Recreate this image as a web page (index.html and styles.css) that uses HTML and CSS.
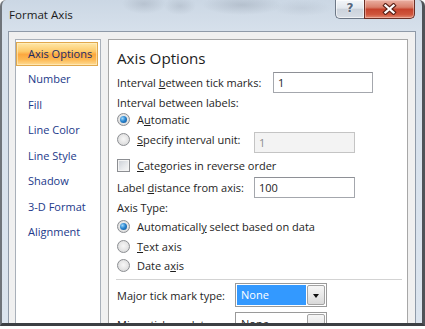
FILE: index.html
```html
<!DOCTYPE html>
<html>
<head>
<meta charset="utf-8">
<link rel="stylesheet" href="styles.css">
</head>
<body>
<div class="window">
  <div class="titlebar">
    <span class="title">Format Axis</span>
    <div class="caption-buttons">
      <div class="btn-help">?</div>
      <div class="btn-close">
        <svg width="15" height="12" viewBox="0 0 15 12">
          <path d="M3.5 2.5 L11.5 9.5 M11.5 2.5 L3.5 9.5" stroke="#5b2219" stroke-width="4.4" stroke-linecap="square" fill="none"/>
          <path d="M3.5 2.5 L11.5 9.5 M11.5 2.5 L3.5 9.5" stroke="#ffffff" stroke-width="2.3" stroke-linecap="square" fill="none"/>
        </svg>
      </div>
    </div>
  </div>
  <div class="client">
    <ul class="nav">
      <li class="active">Axis Options</li>
      <li>Number</li>
      <li>Fill</li>
      <li>Line Color</li>
      <li>Line Style</li>
      <li>Shadow</li>
      <li>3-D Format</li>
      <li>Alignment</li>
    </ul>
    <div class="panel">
      <h1 class="heading">Axis Options</h1>
      <div class="row r-ticks">
        <span class="lbl w-ticks">Interval <u>b</u>etween tick marks:</span>
        <div class="input w-100">1</div>
      </div>
      <div class="row r-text18">Interval between labels:</div>
      <div class="row r-radio17">
        <span class="radio checked"></span><span class="opt">A<u>u</u>tomatic</span>
      </div>
      <div class="row r-spec">
        <div class="optwrap">
          <span class="radio"></span><span class="opt w-spec"><u>S</u>pecify interval unit:</span>
        </div>
        <div class="input disabled w-101">1</div>
      </div>
      <div class="row r-check">
        <span class="check"></span><span class="opt"><u>C</u>ategories in reverse order</span>
      </div>
      <div class="row r-dist">
        <span class="lbl w-dist">Label <u>d</u>istance from axis:</span>
        <div class="input w-101">100</div>
      </div>
      <div class="row r-axistype">Axis Type:</div>
      <div class="row r-radio">
        <span class="radio checked"></span><span class="opt">Automaticall<u>y</u> select based on data</span>
      </div>
      <div class="row r-radio">
        <span class="radio"></span><span class="opt"><u>T</u>ext axis</span>
      </div>
      <div class="row r-radio">
        <span class="radio"></span><span class="opt">Date a<u>x</u>is</span>
      </div>
      <div class="separator"></div>
      <div class="row r-major">
        <span class="lbl w-tick">Major tick mark type:</span>
        <div class="combo selected"><span class="val">None</span><span class="arrow"></span></div>
      </div>
      <div class="row r-minor">
        <span class="lbl w-tick">Minor tick mark type:</span>
        <div class="combo"><span class="val">None</span><span class="arrow"></span></div>
      </div>
    </div>
  </div>
</div>
</body>
</html>
```
FILE: styles.css
```css
html, body {
  margin: 0;
  padding: 0;
  background: #ffffff;
}

body {
  font-family: "Open Sans", "Noto Sans", sans-serif;
  font-size: 11px;
  color: #1e1e1e;
}

.window {
  width: 425px;
  height: 326px;
  box-sizing: border-box;
  overflow: hidden;
  border-left: 2px solid #6f747a;
  border-right: 3px solid #4f5358;
  border-bottom: 3px solid #3c3f43;
  border-top-left-radius: 6px;
  border-top-right-radius: 6px;
  background:
    radial-gradient(ellipse 22px 10px at 142px 4px, rgba(120,130,145,0.25), transparent),
    radial-gradient(ellipse 16px 9px at 178px 6px, rgba(120,130,145,0.22), transparent),
    radial-gradient(ellipse 40px 10px at 240px 5px, rgba(110,120,135,0.25), transparent),
    radial-gradient(ellipse 30px 8px at 300px 8px, rgba(130,140,155,0.15), transparent),
    linear-gradient(180deg, #cbd7e4 0px, #d6e0eb 30px, #dbe4ee 100%);
  box-shadow: 0 1px 2px rgba(0,0,0,0.35);
}

.titlebar {
  height: 31px;
  display: flex;
  padding-left: 7px;
  padding-right: 7px;
}

.title {
  font-size: 11.6px;
  line-height: 16px;
  padding-top: 7px;
  color: #1b1b1b;
}

.caption-buttons {
  margin-left: auto;
  display: flex;
  align-self: flex-start;
}

.btn-help {
  width: 29px;
  height: 19px;
  box-sizing: border-box;
  border: 1px solid #6d7887;
  border-top: none;
  border-right: none;
  border-bottom-left-radius: 5px;
  background: linear-gradient(180deg, #f3f6f9 0%, #e2e7ed 45%, #ccd3dc 52%, #d7dde5 100%);
  box-shadow: inset 0 0 0 1px rgba(255,255,255,0.6);
  text-align: center;
  font-family: "DejaVu Sans", sans-serif;
  font-weight: bold;
  font-size: 12px;
  line-height: 17px;
  color: #56677d;
  text-shadow: 0 0 2px #ffffff;
}

.btn-close {
  width: 51px;
  height: 19px;
  box-sizing: border-box;
  border: 1px solid #6a2f26;
  border-top: none;
  border-bottom-right-radius: 5px;
  background: linear-gradient(180deg, #eab0a3 0%, #d9806c 40%, #c6432d 52%, #cf553c 80%, #e28b73 100%);
  box-shadow: inset 0 0 0 1px rgba(255,220,210,0.45);
  display: flex;
  align-items: center;
  justify-content: center;
}

.client {
  margin: 0 6px;
  height: 320px;
  box-sizing: border-box;
  border: 1px solid #8f9aa8;
  border-bottom: none;
  background: #f0f0f0;
  padding: 7px 6px 0 6px;
  display: flex;
  gap: 7px;
}

.nav {
  width: 86px;
  box-sizing: border-box;
  margin: 0;
  padding: 2px 2px 0 0;
  list-style: none;
  background: #ffffff;
  border: 1px solid #a9b0b9;
  color: #22398a;
}

.nav li {
  height: 24px;
  margin-bottom: 1.43px;
  box-sizing: border-box;
  padding-left: 12px;
  line-height: 24px;
  white-space: nowrap;
}

.nav li.active {
  border: 1px solid #e0a84c;
  padding-left: 11px;
  line-height: 22px;
  color: #1a2a66;
  background: linear-gradient(180deg, #fee7a8 0%, #fdca6a 38%, #fca83f 52%, #fdb852 75%, #fedc94 100%);
  box-shadow: inset 0 0 0 1px rgba(255,240,200,0.6);
}

.panel {
  width: 300px;
  box-sizing: border-box;
  background: #ffffff;
  border: 1px solid #a7a7a7;
  padding: 0 5px 0 8px;
}

.heading {
  margin: 0;
  height: 32px;
  box-sizing: border-box;
  padding-top: 4px;
  line-height: 28px;
  font-size: 15.2px;
  font-weight: normal;
  color: #1e1e1e;
}

.row {
  display: flex;
  align-items: center;
  white-space: nowrap;
}

.lbl {
  flex: none;
}

.w-ticks { width: 156px; }
.w-dist { width: 137px; }
.w-tick { width: 118px; }
.w-spec { width: 117px; }

.r-ticks { height: 21px; }
.r-text18 { height: 18px; }
.r-radio17 { height: 17px; }
.r-spec { height: 21px; margin-top: 4px; }
.r-spec .optwrap { display: flex; align-items: center; margin-bottom: 6px; }
.r-check { height: 20px; margin-top: 2px; }
.r-dist { height: 21px; margin-top: 2px; }
.r-axistype { height: 19px; }
.r-radio { height: 19.5px; }
.r-major { height: 24px; margin-top: 3px; }
.r-minor { height: 24px; margin-top: 5px; }

.opt {
  margin-left: 7px;
}

.input {
  height: 21px;
  box-sizing: border-box;
  border: 1px solid #a4a7ad;
  border-top-color: #8e9096;
  background: #ffffff;
  padding-left: 4px;
  line-height: 19px;
}

.w-100 { width: 100px; }
.w-101 { width: 101px; }

.input.disabled {
  background: #f3f3f3;
  border-color: #c4c4c4;
  color: #8d8d8d;
}

.radio {
  flex: none;
  width: 13px;
  height: 13px;
  box-sizing: border-box;
  border-radius: 50%;
  border: 1px solid #8c8e92;
  background: radial-gradient(circle at 50% 45%, #f7f7f7 0%, #e6e6e6 50%, #cfd0d2 100%);
  position: relative;
}

.radio.checked::after {
  content: "";
  position: absolute;
  left: 2px;
  top: 2px;
  width: 7px;
  height: 7px;
  border-radius: 50%;
  background: radial-gradient(circle at 35% 35%, #9fd8fb 0%, #2a86d0 45%, #0b4a8c 100%);
}

.check {
  flex: none;
  width: 13px;
  height: 13px;
  box-sizing: border-box;
  border: 1px solid #8c8e92;
  background: linear-gradient(135deg, #c9ced5 0%, #e6e8eb 55%, #f8f8f8 100%);
  box-shadow: inset 0 0 0 1px #f4f4f4;
}

.separator {
  height: 1px;
  margin: 3.5px 0 0 -1px;
  background: #d3d3d3;
}

.combo {
  width: 92px;
  height: 24px;
  box-sizing: border-box;
  border: 1px solid #9a9a9a;
  background: #ffffff;
  display: flex;
  padding: 1px;
}

.combo .val {
  flex: 1;
  padding-left: 4px;
  line-height: 20px;
}

.combo.selected .val {
  background: #3399ff;
  color: #ffffff;
  margin-right: 1px;
}

.combo .arrow {
  width: 18px;
  box-sizing: border-box;
  border: 1px solid #a3a3a3;
  border-radius: 2px;
  background: linear-gradient(180deg, #f6f6f6 0%, #e9e9e9 50%, #d9d9d9 100%);
  position: relative;
}

.combo .arrow::after {
  content: "";
  position: absolute;
  left: 4.5px;
  top: 8px;
  width: 0;
  height: 0;
  border-left: 3.5px solid transparent;
  border-right: 3.5px solid transparent;
  border-top: 4px solid #111111;
}
```
